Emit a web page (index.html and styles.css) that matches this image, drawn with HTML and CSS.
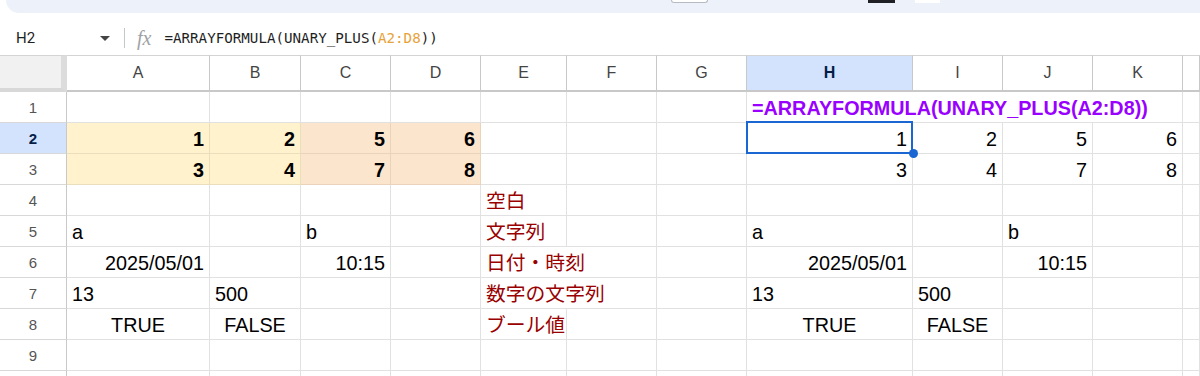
FILE: index.html
```html
<!DOCTYPE html>
<html lang="ja">
<head>
    <meta charset="UTF-8">
    <title>UNARY_PLUS - Sheet</title>
    <link rel="stylesheet" href="styles.css">
</head>
<body>
    <div class="toolbar">
        <div class="tb-box"></div>
        <div class="tb-bar"></div>
        <div class="tb-white"></div>
    </div>

    <div class="formula-bar">
        <div class="name-box">
            <span>H2</span>
            <svg width="10" height="5" viewBox="0 0 10 5"><path d="M0 0h10L5 5z" fill="#444"/></svg>
        </div>
        <span class="fx">fx</span>
        <span class="formula">=ARRAYFORMULA(UNARY_PLUS(<span class="ref">A2:D8</span>))</span>
    </div>

    <div class="sheet">
        <!-- column headers -->
        <div class="corner"></div>
        <div class="ch">A</div>
        <div class="ch">B</div>
        <div class="ch">C</div>
        <div class="ch">D</div>
        <div class="ch">E</div>
        <div class="ch">F</div>
        <div class="ch">G</div>
        <div class="ch active">H</div>
        <div class="ch">I</div>
        <div class="ch">J</div>
        <div class="ch">K</div>
        <div class="ch"></div>

        <!-- row 1 -->
        <div class="rh">1</div>
        <div class="c"></div><div class="c"></div><div class="c"></div><div class="c"></div>
        <div class="c"></div><div class="c"></div><div class="c"></div>
        <div class="c span4 formula-cell">=ARRAYFORMULA(UNARY_PLUS(A2:D8))</div>
        <div class="c"></div>

        <!-- row 2 -->
        <div class="rh active">2</div>
        <div class="c yel r b">1</div>
        <div class="c yel r b">2</div>
        <div class="c org r b">5</div>
        <div class="c org r b">6</div>
        <div class="c"></div><div class="c"></div><div class="c"></div>
        <div class="c r selected">1</div>
        <div class="c r">2</div>
        <div class="c r">5</div>
        <div class="c r">6</div>
        <div class="c"></div>

        <!-- row 3 -->
        <div class="rh">3</div>
        <div class="c yel r b">3</div>
        <div class="c yel r b">4</div>
        <div class="c org r b">7</div>
        <div class="c org r b">8</div>
        <div class="c"></div><div class="c"></div><div class="c"></div>
        <div class="c r">3</div>
        <div class="c r">4</div>
        <div class="c r">7</div>
        <div class="c r">8</div>
        <div class="c"></div>

        <!-- row 4 -->
        <div class="rh">4</div>
        <div class="c"></div><div class="c"></div><div class="c"></div><div class="c"></div>
        <div class="c note">空白</div>
        <div class="c"></div><div class="c"></div><div class="c"></div><div class="c"></div>
        <div class="c"></div><div class="c"></div><div class="c"></div>

        <!-- row 5 -->
        <div class="rh">5</div>
        <div class="c">a</div>
        <div class="c"></div>
        <div class="c">b</div>
        <div class="c"></div>
        <div class="c note">文字列</div>
        <div class="c"></div><div class="c"></div>
        <div class="c">a</div>
        <div class="c"></div>
        <div class="c">b</div>
        <div class="c"></div><div class="c"></div>

        <!-- row 6 -->
        <div class="rh">6</div>
        <div class="c r">2025/05/01</div>
        <div class="c"></div>
        <div class="c r">10:15</div>
        <div class="c"></div>
        <div class="c note span2">日付・時刻</div>
        <div class="c"></div>
        <div class="c r">2025/05/01</div>
        <div class="c"></div>
        <div class="c r">10:15</div>
        <div class="c"></div><div class="c"></div>

        <!-- row 7 -->
        <div class="rh">7</div>
        <div class="c">13</div>
        <div class="c">500</div>
        <div class="c"></div><div class="c"></div>
        <div class="c note span2">数字の文字列</div>
        <div class="c"></div>
        <div class="c">13</div>
        <div class="c">500</div>
        <div class="c"></div><div class="c"></div><div class="c"></div>

        <!-- row 8 -->
        <div class="rh">8</div>
        <div class="c ctr">TRUE</div>
        <div class="c ctr">FALSE</div>
        <div class="c"></div><div class="c"></div>
        <div class="c note">ブール値</div>
        <div class="c"></div><div class="c"></div>
        <div class="c ctr">TRUE</div>
        <div class="c ctr">FALSE</div>
        <div class="c"></div><div class="c"></div><div class="c"></div>

        <!-- row 9 -->
        <div class="rh">9</div>
        <div class="c"></div><div class="c"></div><div class="c"></div><div class="c"></div>
        <div class="c"></div><div class="c"></div><div class="c"></div><div class="c"></div>
        <div class="c"></div><div class="c"></div><div class="c"></div><div class="c"></div>

        <!-- row 10, only its top edge is on screen -->
        <div class="rh"></div>
        <div class="c"></div><div class="c"></div><div class="c"></div><div class="c"></div>
        <div class="c"></div><div class="c"></div><div class="c"></div><div class="c"></div>
        <div class="c"></div><div class="c"></div><div class="c"></div><div class="c"></div>
    </div>
</body>
</html>
```

FILE: styles.css
```css
* {
    margin: 0;
    padding: 0;
    box-sizing: border-box;
}

body {
    width: 1200px;
    height: 376px;
    overflow: hidden;
    background: #fff;
    color: #000;
    font-family: 'Liberation Sans', Arial, 'Noto Sans CJK JP', sans-serif;
}

/* bottom edge of the toolbar, cut off by the screenshot */
.toolbar {
    height: 13px;
    margin-left: 6px;
    background: #edf2fa;
    border-bottom-left-radius: 18px;
    display: flex;
    align-items: flex-start;
}

.tb-box {
    width: 37px;
    height: 3px;
    margin-left: 665px;
    border: 1px solid #b8bcc2;
    border-top: none;
    border-radius: 0 0 3px 3px;
    background: #fff;
}

.tb-bar {
    width: 27px;
    height: 3px;
    margin-left: 160px;
    background: #202124;
}

.tb-white {
    width: 25px;
    height: 3px;
    margin-left: 20px;
    background: #fff;
}

.formula-bar {
    height: 42px;
    padding-top: 8px;
    display: flex;
    align-items: center;
}

.name-box {
    width: 125px;
    height: 20px;
    padding: 0 14px 0 16px;
    display: flex;
    align-items: center;
    justify-content: space-between;
    border-right: 1px solid #c4c7c5;
    font: 15px Roboto, 'Liberation Sans', sans-serif;
    color: #1f1f1f;
}

.fx {
    margin-left: 12px;
    font: italic 20px 'Liberation Serif', serif;
    color: #9ea2a6;
}

.formula {
    margin-left: 13px;
    font: 14.2px 'DejaVu Sans Mono', monospace;
    color: #1f1f1f;
}

.ref {
    color: #e8a23a;
}

/* grid */
.sheet {
    display: grid;
    grid-template-columns: 67px 143px 91px 90px 90px 86px 90px 90px 166px 90px 90px 90px 1fr;
    grid-template-rows: 37px;
    grid-auto-rows: 31px;
}

.corner {
    background: #f1f1f1;
    border-top: 1px solid #d4d4d4;
    border-right: 6px solid #dcdcdc;
    border-bottom: 4px solid #d8d8d8;
}

.ch {
    display: flex;
    align-items: center;
    justify-content: center;
    border-top: 1px solid #d4d4d4;
    border-right: 1px solid #c8c8c8;
    border-bottom: 2px solid #c8c8c8;
    font-size: 16px;
    color: #444;
}

.rh {
    display: flex;
    align-items: center;
    justify-content: center;
    border-right: 1px solid #c8c8c8;
    border-bottom: 1px solid #d8d8d8;
    font-size: 15px;
    color: #555;
}

.ch.active,
.rh.active {
    background: #d3e3fd;
    color: #041e49;
    font-weight: bold;
}

.c {
    display: flex;
    align-items: flex-end;
    padding: 0 5px 3px;
    border-right: 1px solid #e1e1e1;
    border-bottom: 1px solid #e1e1e1;
    font-size: 19.8px;
    line-height: 22px;
    white-space: nowrap;
}

.r {
    justify-content: flex-end;
}

.ctr {
    justify-content: center;
}

.b {
    font-weight: bold;
}

.yel {
    background: #fff2cc;
    border-color: #eadfbd;
}

.org {
    background: #fce5cd;
    border-color: #ead3bb;
}

.note {
    color: #990000;
}

.span2 {
    grid-column: span 2;
}

.span4 {
    grid-column: span 4;
}

.formula-cell {
    color: #9900ff;
    font-weight: bold;
}

/* selection frame over H2 */
.selected {
    position: relative;
}

.selected::after {
    content: '';
    position: absolute;
    top: -2px;
    left: -1px;
    right: -1px;
    bottom: -1px;
    border: 2px solid #1a66d2;
}

.selected::before {
    content: '';
    position: absolute;
    right: -6px;
    bottom: -5px;
    width: 9px;
    height: 9px;
    border-radius: 50%;
    background: #1a66d2;
    z-index: 2;
}
```
